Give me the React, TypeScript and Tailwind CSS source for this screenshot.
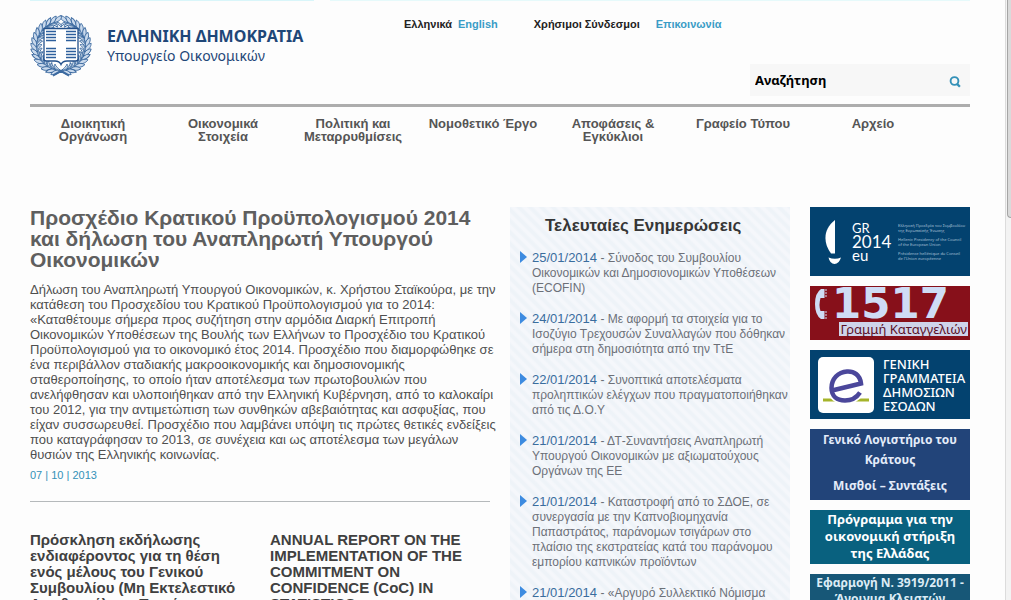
import { Fragment } from "react";

const NAV: string[][] = [
  ["Διοικητική", "Οργάνωση"],
  ["Οικονομικά", "Στοιχεία"],
  ["Πολιτική και", "Μεταρρυθμίσεις"],
  ["Νομοθετικό Έργο"],
  ["Αποφάσεις &", "Εγκύκλιοι"],
  ["Γραφείο Τύπου"],
  ["Αρχείο"],
];

const BODY = [
  "Δήλωση του Αναπληρωτή Υπουργού Οικονομικών, κ. Χρήστου Σταϊκούρα, με την",
  "κατάθεση του Προσχεδίου του Κρατικού Προϋπολογισμού για το 2014:",
  "«Καταθέτουμε σήμερα προς συζήτηση στην αρμόδια Διαρκή Επιτροπή",
  "Οικονομικών Υποθέσεων της Βουλής των Ελλήνων το Προσχέδιο του Κρατικού",
  "Προϋπολογισμού για το οικονομικό έτος 2014. Προσχέδιο που διαμορφώθηκε σε",
  "ένα περιβάλλον σταδιακής μακροοικονομικής και δημοσιονομικής",
  "σταθεροποίησης, το οποίο ήταν αποτέλεσμα των πρωτοβουλιών που",
  "ανελήφθησαν και υλοποιήθηκαν από την Ελληνική Κυβέρνηση, από το καλοκαίρι",
  "του 2012, για την αντιμετώπιση των συνθηκών αβεβαιότητας και ασφυξίας, που",
  "είχαν συσσωρευθεί. Προσχέδιο που λαμβάνει υπόψη τις πρώτες θετικές ενδείξεις",
  "που καταγράφησαν το 2013, σε συνέχεια και ως αποτέλεσμα των μεγάλων",
  "θυσιών της Ελληνικής κοινωνίας.",
];

const NEWS: { date: string; lines: string[] }[] = [
  { date: "25/01/2014", lines: ["Σύνοδος του Συμβουλίου", "Οικονομικών και Δημοσιονομικών Υποθέσεων", "(ECOFIN)"] },
  { date: "24/01/2014", lines: ["Με αφορμή τα στοιχεία για το", "Ισοζύγιο Τρεχουσών Συναλλαγών που δόθηκαν", "σήμερα στη δημοσιότητα από την ΤτΕ"] },
  { date: "22/01/2014", lines: ["Συνοπτικά αποτελέσματα", "προληπτικών ελέγχων που πραγματοποιήθηκαν", "από τις Δ.Ο.Υ"] },
  { date: "21/01/2014", lines: ["ΔΤ-Συναντήσεις Αναπληρωτή", "Υπουργού Οικονομικών με αξιωματούχους", "Οργάνων της ΕΕ"] },
  { date: "21/01/2014", lines: ["Καταστροφή από το ΣΔΟΕ, σε", "συνεργασία με την Καπνοβιομηχανία", "Παπαστράτος, παράνομων τσιγάρων στο", "πλαίσιο της εκστρατείας κατά του παράνομου", "εμπορίου καπνικών προϊόντων"] },
  { date: "21/01/2014", lines: ["«Αργυρό Συλλεκτικό Νόμισμα"] },
];

function Lines({ lines }: { lines: string[] }) {
  return (
    <>
      {lines.map((line, i) => (
        <Fragment key={line}>
          {i > 0 && <br />}
          {line}
        </Fragment>
      ))}
    </>
  );
}

function Emblem() {
  const leaves = Array.from({ length: 32 }, (_, i) => {
    const side = i < 16 ? 1 : -1;
    const step = i % 16;
    return { side, angle: side * (6 + step * 10.8) };
  });
  return (
    <svg viewBox="0 0 62 62" className="size-[62px] shrink-0" fill="none" aria-hidden="true">
      <g stroke="#3c6aa0" strokeWidth="0.900">
        {leaves.map(({ side, angle }) => (
          <g key={angle} transform={`rotate(${angle} 31 31) translate(31 5)`}>
            <path d={side > 0 ? "M5 2C2 -3 -1 -4 -4 -4C-3 0 0 2 5 2Z" : "M-5 2C-2 -3 1 -4 4 -4C3 0 0 2 -5 2Z"} fill="#c9d9ec" />
            <path d={side > 0 ? "M5 2C2 3 -1 5 -2 7C-4 5 0 1 5 2Z" : "M-5 2C-2 3 1 5 2 7C4 5 0 1 -5 2Z"} fill="#e6eef7" />
          </g>
        ))}
        <path d="M23 60l7-4 9 5M39 60l-7-4-9 5" strokeWidth="1.400" />
      </g>
      <path d="M14 13.500H48V44Q48 46 45.500 46H37Q32.500 46 31 49.500Q29.500 46 25 46H16.500Q14 46 14 44Z" fill="#fff" stroke="#23508b" strokeWidth="1.300" />
      <g stroke="#2d5f9c" strokeWidth="1.700">
        <path d="M16 16.500H26M16 19.500H26M16 22.500H26M16 25.500H26" />
        <path d="M36 16.500H46M36 19.500H46M36 22.500H46M36 25.500H46" />
        <path d="M16 33.500H26M16 36.500H26M16 39.500H26M16 42.500H26" />
        <path d="M36 33.500H46M36 36.500H46M36 39.500H46M36 42.500H46" />
      </g>
    </svg>
  );
}

function Header() {
  return (
    <header className="border-b-[3px] border-[#adadad] pb-2">
      <div className="flex">
        <div className="h-px w-[284px] bg-[#d9f6fa]" />
        <div className="ml-4 h-px flex-1 bg-[#e6fafb]" />
      </div>
      <div className="flex h-[63px] items-start justify-between">
        <a href="#home" className="mt-[14px] flex w-[374px] gap-[15px] font-['Noto_Sans',sans-serif] whitespace-nowrap text-[#1f4778]">
          <Emblem />
          <span className="pt-[11px]">
            <span className="block text-base leading-5 font-bold">ΕΛΛΗΝΙΚΗ ΔΗΜΟΚΡΑΤΙΑ</span>
            <span className="block text-sm leading-5">Υπουργείο Οικονομικών</span>
          </span>
        </a>
        <div className="flex flex-1 gap-9 pt-[15px] text-[11px] leading-4 font-bold whitespace-nowrap text-[#222]">
          <div className="flex gap-1.5">
            <a href="#el">Ελληνικά</a>
            <a href="#en" className="text-[#3a9cc6]">English</a>
          </div>
          <div className="flex gap-4">
            <a href="#links">Χρήσιμοι Σύνδεσμοι</a>
            <a href="#contact" className="text-[#3a9cc6]">Επικοινωνία</a>
          </div>
        </div>
      </div>
      <form className="ml-auto flex h-8 w-[220px] items-center bg-[#f7f7f7] pr-[9px] pl-[5px]" onSubmit={(e) => e.preventDefault()}>
        <input
          type="text"
          aria-label="Αναζήτηση"
          defaultValue="Αναζήτηση"
          className="min-w-0 flex-1 bg-transparent font-['Noto_Sans',sans-serif] text-[13px] leading-5 font-bold text-black outline-none"
        />
        <button type="submit" aria-label="Αναζήτηση" className="pt-1">
          <svg viewBox="0 0 12 12" className="size-3" fill="none" stroke="#3491b8">
            <circle cx="5.500" cy="5" r="3.900" strokeWidth="1.900" />
            <path d="M7.800 7.600L10.900 10.700" strokeWidth="2.300" />
          </svg>
        </button>
      </form>
    </header>
  );
}

function Banners() {
  return (
    <aside className="flex flex-col gap-2.5 text-center font-['Noto_Sans',sans-serif] whitespace-nowrap text-white">
      <a href="#gr2014" className="flex h-[69px] items-center bg-[#03426f] pl-[14px] text-left">
        <svg viewBox="0 0 18 46" className="h-[46px] w-[18px]" fill="#fff" aria-hidden="true">
          <path d="M11 1V34.500H7C-1 24 -1 10 11 1Z" />
          <path d="M4.500 38.500Q11 41 17 38.500Q15 45 10.500 45Q6 45 4.500 38.500Z" />
        </svg>
        <span className="ml-2.5 flex w-[46px] flex-col font-['Lato',sans-serif]">
          <span className="text-[13px] leading-[13px]">GR</span>
          <span className="text-[17px] leading-[14px]">2014</span>
          <span className="text-[15px] leading-[13px]">eu</span>
        </span>
        <span className="flex flex-col gap-1 text-[4px] leading-[5px] text-[#a9c1d6]">
          <span>Ελληνική Προεδρία του Συμβουλίου<br />της Ευρωπαϊκής Ένωσης</span>
          <span>Hellenic Presidency of the Council<br />of the European Union</span>
          <span>Présidence hellénique du Conseil<br />de l'Union européenne</span>
        </span>
      </a>
      <a href="#1517" className="flex h-[54px] flex-col bg-[#87101a] pt-[2px] text-[#cfdcf5]">
        <span className="flex h-[34px] items-start pl-1">
          <svg viewBox="0 0 14 34" className="h-[34px] w-[14px] shrink-0" fill="#cfdcf5" aria-hidden="true">
            <path d="M7 1H10.500V10H6.500Q4.500 17 6.500 23H10.500V31H7Q1 27 1 16Q1 5 7 1Z" />
            <path d="M12 1V10M12 23V31" stroke="#cfdcf5" strokeDasharray="2 1" />
          </svg>
          <span className="ml-1 font-['DejaVu_Sans',sans-serif] text-[42px] leading-[32px] font-bold">1517</span>
        </span>
        <span className="mr-0.5 self-end bg-[#cfd4ea] px-px text-[13px] leading-[14px] text-[#5b1028]">Γραμμή Καταγγελιών</span>
      </a>
      <a href="#gsis" className="flex h-[69px] items-center bg-[#03426f] pl-2 text-left">
        <svg viewBox="0 0 56 56" className="size-14 shrink-0" fill="none" aria-hidden="true">
          <rect width="56" height="56" rx="5" fill="#fff" />
          <path d="M5 43H51" stroke="#a5b42a" strokeWidth="3" />
          <path d="M14 33L43 26.500C42 18 36 14 29 14.500C20 15 13.500 22 13.500 31C13.500 39 19 43.500 27 43.500C34 43.500 39 40 42 35.500" stroke="#fff" strokeWidth="8" />
          <path d="M14 33.500L43 26.500C42 18 36 14 29 14.500C20 15 13.500 22 13.500 31C13.500 39 19 43.500 27 43.500C34 43.500 39 40 42 35.500" stroke="#4b479b" strokeWidth="4.500" />
        </svg>
        <span className="ml-[9px] text-[13px] leading-[14px] font-medium">
          <Lines lines={["ΓΕΝΙΚΗ", "ΓΡΑΜΜΑΤΕΙΑ", "ΔΗΜΟΣΙΩΝ", "ΕΣΟΔΩΝ"]} />
        </span>
      </a>
      <a href="#glk" className="flex h-[71px] flex-col bg-[#224479] pt-px text-xs leading-5 font-bold text-[#e4ecfa]">
        <span><Lines lines={["Γενικό Λογιστήριο του", "Κράτους"]} /></span>
        <span className="mt-1.5">Μισθοί – Συντάξεις</span>
      </a>
      <a href="#program" className="h-[54px] bg-[#09617f] pt-px text-[13px] leading-[17px] font-bold">
        <Lines lines={["Πρόγραμμα για την", "οικονομική στήριξη", "της Ελλάδας"]} />
      </a>
      <a href="#n3919" className="h-[54px] bg-[#175777] pt-px text-xs leading-4 font-bold text-[#dcebf5]">
        <Lines lines={["Εφαρμογή Ν. 3919/2011 -", "Άνοιγμα Κλειστών"]} />
      </a>
    </aside>
  );
}

export default function App() {
  return (
    <div className="flex h-screen overflow-hidden bg-[#fdfdfd] font-['Liberation_Sans',Arial,sans-serif]">
      <div className="min-w-0 flex-1 pr-[35px] pl-[30px]">
        <Header />
        <nav className="flex h-[100px] gap-1 pt-2.5 text-center text-[13px] leading-[13px] font-bold whitespace-nowrap text-[#555]">
          {NAV.map((item) => (
            <a key={item[0]} href="#section" className="w-[126px]">
              <Lines lines={item} />
            </a>
          ))}
        </nav>
        <div className="grid grid-cols-[minmax(0,1fr)_280px_160px] items-start gap-5">
          <main className="whitespace-nowrap">
            <article className="border-b border-[#b5b9bb] pb-[18px]">
              <h1 className="text-[21px] leading-[21px] font-bold text-[#5f5f5f]">
                <Lines lines={["Προσχέδιο Κρατικού Προϋπολογισμού 2014", "και δήλωση του Αναπληρωτή Υπουργού", "Οικονομικών"]} />
              </h1>
              <p className="mt-3 text-[13px] leading-[15px] text-[#4f4f4f]">
                <Lines lines={BODY} />
              </p>
              <p className="mt-[5px] text-[11px] leading-4 text-[#3491b8]">07 | 10 | 2013</p>
            </article>
            <div className="mt-[30px] grid grid-cols-2 gap-5 text-[15px] leading-4 font-bold text-[#404040]">
              <h2>
                <Lines lines={["Πρόσκληση εκδήλωσης", "ενδιαφέροντος για τη θέση", "ενός μέλους του Γενικού", "Συμβουλίου (Μη Εκτελεστικό", "Διευθυντή) του Ταμείου"]} />
              </h2>
              <h2>
                <Lines lines={["ANNUAL REPORT ON THE", "IMPLEMENTATION OF THE", "COMMITMENT ON", "CONFIDENCE (CoC) IN", "STATISTICS"]} />
              </h2>
            </div>
          </main>
          <section className="min-h-[400px] bg-[#f3f6fa] bg-[repeating-linear-gradient(45deg,#eef3f8_0px,#eef3f8_2px,#f5f7fb_4px,#f5f7fb_6px,#eef3f8_8px)] pt-[9px] pl-[10px] whitespace-nowrap">
            <h2 className="pl-[25px] text-[17px] leading-5 font-bold text-[#363636]">Τελευταίες Ενημερώσεις</h2>
            <ul className="mt-3.5 flex flex-col gap-[15px] text-xs leading-[15px] text-[#6c7078]">
              {NEWS.map(({ date, lines }) => (
                <li key={lines[0]} className="flex gap-[5px]">
                  <svg viewBox="0 0 7 12" className="mt-px h-3 w-[7px] shrink-0" fill="#3d8be0" aria-hidden="true">
                    <path d="M0 0L7 6L0 12Z" />
                  </svg>
                  <a href="#news">
                    <span className="text-[13px] leading-[15px] text-[#3a6d9e]">{date}</span> - <Lines lines={lines} />
                  </a>
                </li>
              ))}
            </ul>
          </section>
          <Banners />
        </div>
      </div>
      <div className="w-[6px] shrink-0 border-l border-[#dcdcdc] bg-[#f3f3f3] pl-px" aria-hidden="true">
        <div className="h-[218px] rounded-bl-sm border-b border-l border-[#a5a5a5] bg-[#dadada]" />
      </div>
    </div>
  );
}
